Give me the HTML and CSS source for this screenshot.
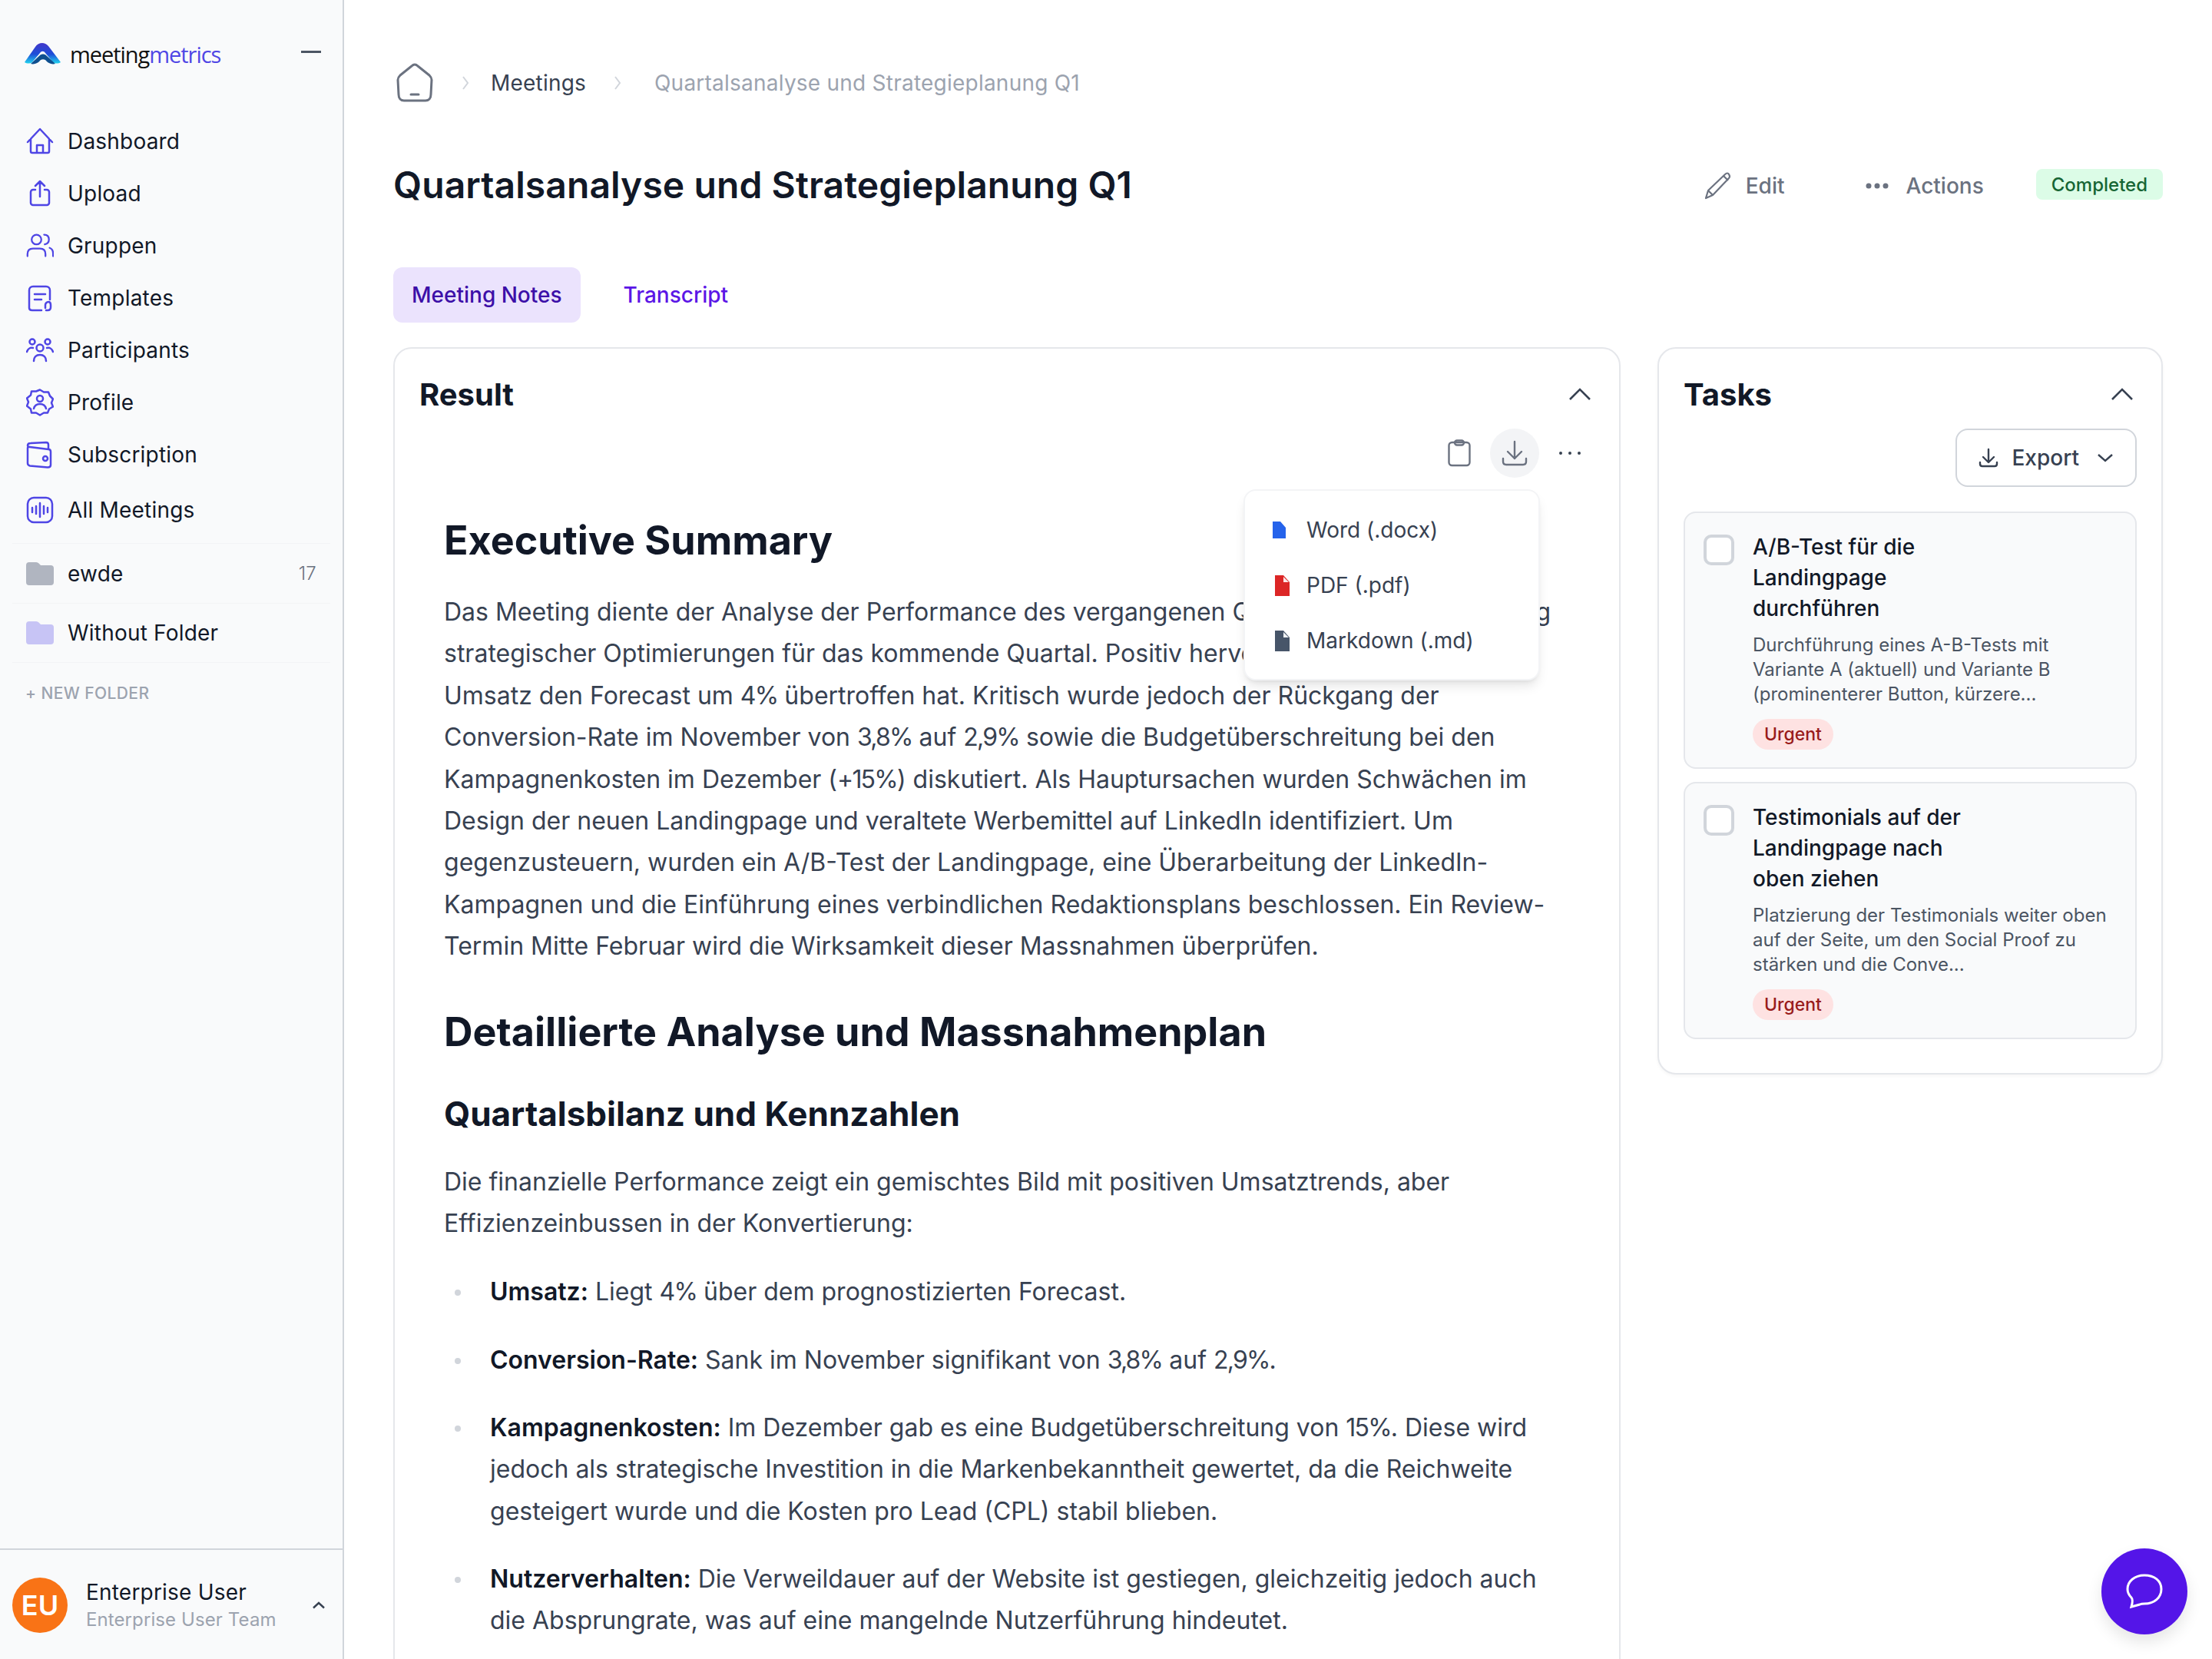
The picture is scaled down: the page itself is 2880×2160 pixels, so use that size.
FILE: index.html
```html
<!DOCTYPE html>
<html lang="de">
<head>
<meta charset="utf-8">
<title>Quartalsanalyse und Strategieplanung Q1</title>
<link rel="stylesheet" href="styles.css">
</head>
<body>
<aside class="sidebar">
  <div class="brand">
    <svg class="logo" viewBox="0 0 48 30"><defs><linearGradient id="lg" x1="0" y1="0" x2="0" y2="1"><stop offset="0" stop-color="#4338ca"/><stop offset=".55" stop-color="#1d4ed8"/><stop offset="1" stop-color="#22d3ee"/></linearGradient></defs><path d="M0 26 14 6C18 0 26-1 31 5l16 21c-3 2-7 2-10 0L27 14c-2-3-5-3-7 0L10 26c-3 2-7 2-10 0Z" fill="url(#lg)"/><path d="M8 28 20 17c2-2 6-2 8 0l12 11c-3 1-7 0-10-2l-3-3c-2-1-4-1-6 0l-3 3c-3 2-7 3-10 2Z" fill="#0e4f8f"/></svg>
    <span class="wordmark">meeting<span class="wordmark-accent">metrics</span></span>
    <span class="collapse"></span>
  </div>
  <nav class="nav">
    <a class="nav-item"><svg class="nav-icon" viewBox="0 0 36 36"><path d="M2 19 18 2l16 17M6 15v16a2 2 0 0 0 2 2h20a2 2 0 0 0 2-2V15M14 33V23h8v10"/></svg>Dashboard</a>
    <a class="nav-item"><svg class="nav-icon" viewBox="0 0 36 36"><path d="M18 22V2m-6 6 6-6 6 6M12 13H9a3 3 0 0 0-3 3v14a3 3 0 0 0 3 3h18a3 3 0 0 0 3-3V16a3 3 0 0 0-3-3h-3"/></svg>Upload</a>
    <a class="nav-item"><svg class="nav-icon" viewBox="0 0 40 36"><circle cx="15" cy="9" r="7"/><path d="M2 33v-3c0-5 3-8 8-8h10c5 0 8 3 8 8v3M26 2c5 0 7 3 7 7s-2 6-6 7M34 21c3 1 5 4 5 8v4"/></svg>Gruppen</a>
    <a class="nav-item"><svg class="nav-icon" viewBox="0 0 36 36"><path d="M31 20V8c0-3-2-5-5-5H9C6 3 4 5 4 8v23c0 2 2 3 4 3h12M11 13h14M11 20h9"/><path d="M26 34h2c2 0 4-1 4-4v-3c0-2-1-4-3-4s-4 2-4 4v4"/></svg>Templates</a>
    <a class="nav-item"><svg class="nav-icon" viewBox="0 0 36 36"><circle cx="8" cy="7" r="3.500"/><circle cx="28" cy="7" r="3.500"/><circle cx="18" cy="15" r="4.500"/><path d="M1 20c1-3 4-6 8-5M35 20c-1-3-4-6-8-5M10 32c0-5 3-8 8-8s8 3 8 8"/></svg>Participants</a>
    <a class="nav-item"><svg class="nav-icon" viewBox="0 0 36 36"><path d="M18 1.500l5 3 6 0 2 5 4 4-2 5 2 5-5 3-2 5-5 0-5 3-5-3-6 0-1-5-5-4 2-5-2-5 5-4 1-5 6 0Z"/><circle cx="18" cy="13" r="4"/><path d="M10 26c1-4 4-6 8-6s7 2 8 6"/></svg>Profile</a>
    <a class="nav-item"><svg class="nav-icon" viewBox="0 0 36 36"><path d="M2 9v20c0 2 1 3 3 3.500l23 2c3 0 4-1 4-3V14c0-2-1-3-3-3L5 8c-2 0-3-1-3-2 0-2 2-3 4-3l20-1c2 0 3 1 3 3v6"/><circle cx="25" cy="23" r="3"/></svg>Subscription</a>
    <a class="nav-item nav-item-gap"><svg class="nav-icon" viewBox="0 0 36 36"><rect x="2" y="2" width="32" height="32" rx="8"/><path d="M8 15v6M13 13v10M18 9v18M23 13v10M28 15v6"/></svg>All Meetings</a>
  </nav>
  <div class="folders">
    <div class="folder"><svg class="folder-icon grey" viewBox="0 0 36 30"><path d="M0 4a4 4 0 0 1 4-4h9c2 0 3 1 4 2l2 2h13a4 4 0 0 1 4 4v18a4 4 0 0 1-4 4H4a4 4 0 0 1-4-4Z"/></svg><span class="folder-name">ewde</span><span class="folder-count">17</span></div>
    <div class="folder"><svg class="folder-icon violet" viewBox="0 0 36 30"><path d="M0 4a4 4 0 0 1 4-4h9c2 0 3 1 4 2l2 2h13a4 4 0 0 1 4 4v18a4 4 0 0 1-4 4H4a4 4 0 0 1-4-4Z"/></svg><span class="folder-name">Without Folder</span></div>
  </div>
  <div class="new-folder">+ NEW FOLDER</div>
  <div class="user">
    <div class="avatar">EU</div>
    <div class="user-text"><div class="user-name">Enterprise User</div><div class="user-team">Enterprise User Team</div></div>
    <svg class="user-caret" viewBox="0 0 18 12"><path d="M2 9.500 9 3l7 6.500"/></svg>
  </div>
</aside>
<main class="main">
  <div class="crumbs">
    <svg class="crumb-home" viewBox="0 0 50 52"><path d="M25 2c-2 0-3 1-4 2L6 16c-2 2-3 4-3 6l1 19c0 5 3 8 7 8h28c4 0 7-3 7-8l1-19c0-2-1-4-3-6L29 4c-1-1-2-2-4-2Z"/><path d="M20 41h10"/></svg>
    <svg class="crumb-sep" viewBox="0 0 10 20"><path d="M2 2l6 8-6 8"/></svg>
    <span class="crumb-link">Meetings</span>
    <svg class="crumb-sep" viewBox="0 0 10 20"><path d="M2 2l6 8-6 8"/></svg>
    <span class="crumb-current">Quartalsanalyse und Strategieplanung Q1</span>
  </div>
  <header class="page-head">
    <h1 class="page-title">Quartalsanalyse und Strategieplanung Q1</h1>
    <div class="page-actions">
      <span class="action action-edit"><svg class="action-icon" viewBox="0 0 36 36"><path d="M2 34l3-10L27 3c2-2 4-2 5 0s2 3 0 5L11 30ZM5 24l6 6M25 5l6 6"/></svg>Edit</span>
      <span class="action action-more"><svg class="dots-icon" viewBox="0 0 32 10"><circle cx="5" cy="5" r="3.500"/><circle cx="16" cy="5" r="3.500"/><circle cx="27" cy="5" r="3.500"/></svg>Actions</span>
      <span class="status">Completed</span>
    </div>
  </header>
  <div class="tabs"><span class="tab tab-active">Meeting Notes</span><span class="tab">Transcript</span></div>
  <div class="columns">
    <section class="card result">
      <div class="card-head"><h2 class="card-title">Result</h2><svg class="card-caret" viewBox="0 0 30 18"><path d="M2 16 15 3l13 13"/></svg></div>
      <div class="tools">
        <svg class="tool-icon" viewBox="0 0 30 36"><rect x="1.500" y="4" width="27" height="30" rx="4"/><rect x="9" y="1.500" width="12" height="6" rx="3"/></svg>
        <span class="tool-active"><svg class="tool-icon dl" viewBox="0 0 34 34"><path d="M17 2v22M8 15l9 9 9-9M2 24v4c0 3 2 4 4 4h22c2 0 4-1 4-4v-4"/></svg></span>
        <span class="tool-more"><i></i><i></i><i></i></span>
      </div>
      <div class="menu">
        <div class="menu-item"><svg class="file file-word" viewBox="0 0 17 22"><path d="M0 0h10l7 8v14H0Z" fill="#2563eb"/></svg>Word (.docx)</div>
        <div class="menu-item"><svg class="file file-sm" viewBox="0 0 19 27"><path d="M0 0h11l8 9v18H0Z" fill="#dc2626"/><path d="M11 2v7h7Z" fill="#fde8e8"/></svg>PDF (.pdf)</div>
        <div class="menu-item"><svg class="file file-sm" viewBox="0 0 19 27"><path d="M0 0h11l8 9v18H0Z" fill="#475569"/><path d="M11 2v7h7Z" fill="#eef0f3"/></svg>Markdown (.md)</div>
      </div>
      <article class="doc">
        <h2 class="doc-h1 first">Executive Summary</h2>
        <p class="doc-p">Das Meeting diente der Analyse der Performance des vergangenen Quartals und die Herleitung strategischer Optimierungen für das kommende Quartal. Positiv hervorzuheben ist, dass der Umsatz den Forecast um <span class="num">4%</span> übertroffen hat. Kritisch wurde jedoch der Rückgang der Conversion-Rate im November von <span class="num">3,8%</span> auf <span class="num">2,9%</span> sowie die Budgetüberschreitung bei den Kampagnenkosten im Dezember (<span class="num">+15%</span>) diskutiert. Als Hauptursachen wurden Schwächen im Design der neuen Landingpage und veraltete Werbemittel auf LinkedIn identifiziert. Um gegenzusteuern, wurden ein A/B-Test der Landingpage, eine Überarbeitung der LinkedIn-Kampagnen und die Einführung eines verbindlichen Redaktionsplans beschlossen. Ein Review-Termin Mitte Februar wird die Wirksamkeit dieser Massnahmen überprüfen.</p>
        <h2 class="doc-h1">Detaillierte Analyse und Massnahmenplan</h2>
        <h3 class="doc-h2">Quartalsbilanz und Kennzahlen</h3>
        <p class="doc-p">Die finanzielle Performance zeigt ein gemischtes Bild mit positiven Umsatztrends, aber Effizienzeinbussen in der Konvertierung:</p>
        <ul class="doc-list">
          <li><b>Umsatz:</b> Liegt <span class="num">4%</span> über dem prognostizierten Forecast.</li>
          <li><b>Conversion-Rate:</b> Sank im November signifikant von <span class="num">3,8%</span> auf <span class="num">2,9%</span>.</li>
          <li><b>Kampagnenkosten:</b> Im Dezember gab es eine Budgetüberschreitung von <span class="num">15%</span>. Diese wird jedoch als strategische Investition in die Markenbekanntheit gewertet, da die Reichweite gesteigert wurde und die Kosten pro Lead (CPL) stabil blieben.</li>
          <li><b>Nutzerverhalten:</b> Die Verweildauer auf der Website ist gestiegen, gleichzeitig jedoch auch die Absprungrate, was auf eine mangelnde Nutzerführung hindeutet.</li>
        </ul>
      </article>
    </section>
    <section class="card tasks">
      <div class="card-head"><h2 class="card-title">Tasks</h2><svg class="card-caret" viewBox="0 0 30 18"><path d="M2 16 15 3l13 13"/></svg></div>
      <div class="export-row"><button class="export"><svg class="export-dl" viewBox="0 0 26 26"><path d="M13 2v16M6 12l7 7 7-7M2 19v2c0 2 1 3 3 3h16c2 0 3-1 3-3v-2"/></svg>Export<svg class="export-caret" viewBox="0 0 22 12"><path d="M2 2l9 8 9-8"/></svg></button></div>
      <div class="task">
        <span class="check"></span>
        <div class="task-body">
          <div class="task-title">A/B-Test für die Landingpage durchführen</div>
          <div class="task-desc">Durchführung eines A-B-Tests mit Variante A (aktuell) und Variante B (prominenterer Button, kürzere...</div>
          <span class="urgent">Urgent</span>
        </div>
      </div>
      <div class="task">
        <span class="check"></span>
        <div class="task-body">
          <div class="task-title">Testimonials auf der Landingpage nach oben ziehen</div>
          <div class="task-desc">Platzierung der Testimonials weiter oben auf der Seite, um den Social Proof zu stärken und die Conve...</div>
          <span class="urgent">Urgent</span>
        </div>
      </div>
    </section>
  </div>
</main>
<button class="chat"><svg viewBox="0 0 50 46"><path d="M25 2C12 2 3 10 3 20c0 5 2 8 5 11 2 2 2 5 0 12l11-3c2-1 4-1 6-1 13 0 22-8 22-19S38 2 25 2Z"/></svg></button>
</body>
</html>
```
FILE: styles.css
```css
* { box-sizing: border-box; }
html, body { margin: 0; height: 2160px; overflow: hidden; }
body { display: flex; font-family: Inter, "Noto Sans", sans-serif; color: #111827; background: #fff; }
h1, h2, h3, p, ul { margin: 0; padding: 0; }

.sidebar { width: 448px; flex: none; height: 2160px; background: #f9fafb; border-right: 2px solid #d1d5db; display: flex; flex-direction: column; }
.brand { display: flex; align-items: center; height: 72px; margin-top: 34px; padding: 0 28px 0 32px; }
.logo { width: 48px; height: 30px; flex: none; }
.wordmark { margin-left: 11px; font-family: "Open Sans", Inter, sans-serif; font-size: 29px; letter-spacing: -1.05px; color: #111; }
.wordmark-accent { color: #4f46e5; }
.collapse { margin-left: auto; width: 26px; height: 3px; margin-bottom: 6px; background: #4b5563; }
.nav { display: flex; flex-direction: column; padding: 44px 16px 0; }
.nav-item { display: flex; align-items: center; height: 68px; padding-left: 18px; gap: 18px; font-size: 28px; letter-spacing: .2px; color: #111827; }
.nav-item-gap { height: 76px; }
.nav-icon { width: 36px; height: 36px; flex: none; fill: none; stroke: #4f46e5; stroke-width: 2.5; stroke-linecap: round; stroke-linejoin: round; }
.folders { display: flex; flex-direction: column; margin: 5px 16px 0; }
.folder { display: flex; align-items: center; height: 78px; padding: 0 18px; gap: 18px; font-size: 28px; letter-spacing: .2px; border-top: 1px solid #f3f4f6; }
.folder:last-child { border-bottom: 1px solid #f3f4f6; }
.folder-icon { width: 36px; height: 30px; flex: none; }
.folder-icon.grey { fill: #b0b5c0; }
.folder-icon.violet { fill: #c7c4f5; }
.folder-count { margin-left: auto; font-size: 24px; color: #6b7280; font-weight: 300; }
.new-folder { margin: 27px 0 0 33px; font-size: 21px; font-weight: 500; letter-spacing: .4px; color: #9ca3af; }
.user { margin-top: auto; height: 144px; border-top: 2px solid #d1d5db; display: flex; align-items: center; padding: 2px 22px 0 16px; }
.avatar { width: 72px; height: 72px; flex: none; border-radius: 50%; background: #f97316; color: #fff; font-size: 36px; font-weight: 600; display: flex; align-items: center; justify-content: center; }
.user-text { margin-left: 24px; flex: 1; }
.user-name { font-size: 28px; letter-spacing: .2px; line-height: 38px; color: #111827; }
.user-team { font-size: 24px; letter-spacing: .1px; line-height: 34px; color: #9ca3af; }
.user-caret { width: 18px; height: 12px; fill: none; stroke: #374151; stroke-width: 2.4; }

.main { flex: 1; min-width: 0; padding: 80px 64px 0 64px; }
.crumbs { display: flex; align-items: center; height: 56px; }
.crumb-home { width: 50px; height: 52px; flex: none; margin-left: 3px; fill: none; stroke: #6b7280; stroke-width: 3; stroke-linecap: round; stroke-linejoin: round; }
.crumb-sep { width: 10px; height: 20px; flex: none; margin: 0 28px 0 36px; fill: none; stroke: #d1d5db; stroke-width: 2; }
.crumb-link { font-size: 28px; letter-spacing: .2px; color: #374151; }
.crumb-current { font-size: 28px; letter-spacing: .23px; color: #9ca3af; margin-left: 15px; }
.page-head { display: flex; align-items: center; justify-content: space-between; margin-top: 70px; height: 68px; }
.page-title { font-size: 48px; font-weight: 600; letter-spacing: .08px; color: #111827; white-space: nowrap; }
.page-actions { display: flex; align-items: center; }
.action { display: flex; align-items: center; margin-top: 4px; font-size: 28px; font-weight: 500; color: #6b7280; }
.action-edit { gap: 18px; margin-right: 104px; }
.action-more { gap: 22px; margin-right: 68px; }
.action-icon { width: 36px; height: 36px; fill: none; stroke: #6b7280; stroke-width: 2.2; stroke-linejoin: round; }
.dots-icon { width: 32px; height: 10px; fill: #6b7280; }
.status { background: #dcfce7; color: #166534; font-size: 24px; font-weight: 500; border-radius: 8px; height: 40px; padding: 0 20px; display: flex; align-items: center; }
.tabs { display: flex; margin-top: 74px; gap: 32px; align-items: center; }
.tab { height: 72px; padding: 0 24px; display: flex; align-items: center; font-size: 28px; font-weight: 500; color: #5b16e6; border-radius: 12px; }
.tab-active { background: #ebe3fd; color: #3c0fa8; }
.columns { display: flex; align-items: flex-start; gap: 48px; margin-top: 32px; }
.card { background: #fff; border: 2px solid #e5e7eb; border-radius: 24px; }
.result { position: relative; width: 1598px; flex: none; height: 1760px; padding: 0 32px; }
.tasks { flex: 1; padding: 0 32px 44px; box-shadow: 0 2px 4px rgba(0,0,0,.04); }
.card-head { display: flex; align-items: center; justify-content: space-between; height: 118px; }
.card-title { font-size: 40px; font-weight: 700; color: #111827; }
.card-caret { width: 30px; height: 18px; fill: none; stroke: #374151; stroke-width: 2.6; margin-right: 4px; }
.tools { display: flex; justify-content: flex-end; align-items: center; height: 64px; margin-top: -14px; padding-right: 18px; }
.tool-icon { width: 30px; height: 36px; fill: none; stroke: #6b7280; stroke-width: 2.4; stroke-linecap: round; stroke-linejoin: round; }
.tool-active { width: 64px; height: 64px; border-radius: 50%; background: #f3f4f6; display: flex; align-items: center; justify-content: center; margin-left: 25px; }
.dl { width: 34px; height: 34px; }
.tool-more { display: flex; gap: 8px; margin-left: 26px; }
.tool-more i { width: 4px; height: 4px; border-radius: 50%; background: #374151; }
.menu { position: absolute; z-index: 2; top: 183px; left: 1105px; width: 386px; height: 249px; padding: 15px 0; background: #fff; border: 2px solid #f3f4f6; border-radius: 16px; box-shadow: 0 10px 15px -3px rgba(0,0,0,.1), 0 4px 6px -4px rgba(0,0,0,.1); }
.menu-item { height: 72px; display: flex; align-items: center; padding-left: 36px; font-size: 28px; color: #374151; }
.file { flex: none; }
.file-word { width: 17px; height: 22px; margin-right: 27px; }
.file-sm { width: 19px; height: 27px; margin-left: 3px; margin-right: 22px; }
.doc { padding: 50px 32px 0 32px; font-size: 32px; line-height: 54.4px; color: #374151; }
.doc-h1 { font-size: 52px; line-height: 64px; font-weight: 700; color: #111827; margin: 52px 0 16px; }
.doc-h1.first { margin: 0 0 34px; }
.doc-h2 { font-size: 44px; line-height: 56px; font-weight: 700; color: #111827; margin: 46px 0 34px; }
.doc-p { margin-bottom: 35px; }
.num { letter-spacing: -1.8px; }
.doc-list { list-style: none; }
.doc-list li { position: relative; padding-left: 60px; margin-bottom: 33.800px; }
.doc-list li::before { content: ""; position: absolute; left: 14px; top: 24px; width: 8px; height: 8px; border-radius: 50%; background: #d1d5db; }
.doc-list b { font-weight: 600; color: #111827; }
.export-row { display: flex; justify-content: flex-end; margin-top: -14px; margin-bottom: 32px; }
.export { height: 76px; padding: 0 28px; display: flex; align-items: center; background: #fff; border: 2px solid #d1d5db; border-radius: 16px; font: 500 28px Inter, sans-serif; color: #374151; }
.export-dl { width: 26px; height: 26px; margin-right: 17px; fill: none; stroke: #374151; stroke-width: 2.4; stroke-linecap: round; stroke-linejoin: round; }
.export-caret { width: 22px; height: 12px; margin-left: 23px; fill: none; stroke: #374151; stroke-width: 2.4; }
.task { display: flex; background: #f9fafb; border: 2px solid #e5e7eb; border-radius: 16px; padding: 24px 28px 23px 24px; margin-bottom: 17px; }
.task:last-child { margin-bottom: 0; }
.check { width: 40px; height: 40px; flex: none; margin-top: 4px; background: #fff; border: 4px solid #d1d5db; border-radius: 10px; }
.task-body { margin-left: 24px; flex: 1; }
.task-title { font-size: 28px; line-height: 40px; font-weight: 500; color: #111827; width: 300px; }
.task-desc { margin-top: 12px; font-size: 24px; line-height: 32px; color: #4b5563; }
.urgent { display: block; width: fit-content; margin-top: 16px; height: 40px; line-height: 40px; padding: 0 15px; border-radius: 20px; background: #fee2e2; color: #991b1b; font-size: 23px; font-weight: 500; }
.chat { position: fixed; right: 32px; bottom: 32px; width: 112px; height: 112px; border: 0; border-radius: 50%; background: #5415e8; box-shadow: 0 10px 20px rgba(0,0,0,.1); display: flex; align-items: center; justify-content: center; }
.chat svg { width: 50px; height: 46px; fill: none; stroke: #fff; stroke-width: 3; }
```
